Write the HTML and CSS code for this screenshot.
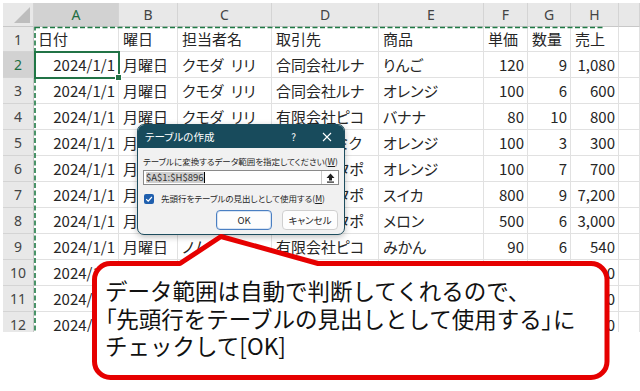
FILE: index.html
```html
<!DOCTYPE html>
<html lang="ja">

<head>
    <meta charset="UTF-8">
    <title>テーブルの作成</title>
    <link rel="stylesheet" href="styles.css">
</head>

<body>
    <div class="page">
        <div class="sheet">
            <div class="corner"><span></span></div>
            <div class="h sel">A</div><div class="h">B</div><div class="h">C</div><div class="h">D</div><div class="h">E</div><div class="h">F</div><div class="h">G</div><div class="h">H</div><div class="h"></div>

            <div class="r">1</div><div class="c">日付</div><div class="c">曜日</div><div class="c">担当者名</div><div class="c">取引先</div><div class="c">商品</div><div class="c">単価</div><div class="c">数量</div><div class="c">売上</div><div class="c"></div>
            <div class="r sel">2</div><div class="c n">2024/1/1</div><div class="c">月曜日</div><div class="c">クモダ&ensp;リリ</div><div class="c">合同会社ルナ</div><div class="c">りんご</div><div class="c n">120</div><div class="c n">9</div><div class="c n">1,080</div><div class="c"></div>
            <div class="r">3</div><div class="c n">2024/1/1</div><div class="c">月曜日</div><div class="c">クモダ&ensp;リリ</div><div class="c">合同会社ルナ</div><div class="c">オレンジ</div><div class="c n">100</div><div class="c n">6</div><div class="c n">600</div><div class="c"></div>
            <div class="r">4</div><div class="c n">2024/1/1</div><div class="c">月曜日</div><div class="c">クモダ&ensp;リリ</div><div class="c">有限会社ピコ</div><div class="c">バナナ</div><div class="c n">80</div><div class="c n">10</div><div class="c n">800</div><div class="c"></div>
            <div class="r">5</div><div class="c n">2024/1/1</div><div class="c">月曜日</div><div class="c">ノムラ&ensp;ケン</div><div class="c">株式会社ミク</div><div class="c">オレンジ</div><div class="c n">100</div><div class="c n">3</div><div class="c n">300</div><div class="c"></div>
            <div class="r">6</div><div class="c n">2024/1/1</div><div class="c">月曜日</div><div class="c">ノムラ&ensp;ケン</div><div class="c">株式会社タポ</div><div class="c">オレンジ</div><div class="c n">100</div><div class="c n">7</div><div class="c n">700</div><div class="c"></div>
            <div class="r">7</div><div class="c n">2024/1/1</div><div class="c">月曜日</div><div class="c">ノムラ&ensp;ケン</div><div class="c">株式会社タポ</div><div class="c">スイカ</div><div class="c n">800</div><div class="c n">9</div><div class="c n">7,200</div><div class="c"></div>
            <div class="r">8</div><div class="c n">2024/1/1</div><div class="c">月曜日</div><div class="c">ノムラ&ensp;ケン</div><div class="c">株式会社タポ</div><div class="c">メロン</div><div class="c n">500</div><div class="c n">6</div><div class="c n">3,000</div><div class="c"></div>
            <div class="r">9</div><div class="c n">2024/1/1</div><div class="c">月曜日</div><div class="c">ノムラ&ensp;ケン</div><div class="c">有限会社ピコ</div><div class="c">みかん</div><div class="c n">90</div><div class="c n">6</div><div class="c n">540</div><div class="c"></div>
            <div class="r">10</div><div class="c n">2024/1/1</div><div class="c">月曜日</div><div class="c">ノムラ&ensp;ケン</div><div class="c">有限会社ピコ</div><div class="c">りんご</div><div class="c n">120</div><div class="c n">5</div><div class="c n">600</div><div class="c"></div>
            <div class="r">11</div><div class="c n">2024/1/1</div><div class="c">月曜日</div><div class="c">ノムラ&ensp;ケン</div><div class="c">有限会社ピコ</div><div class="c">バナナ</div><div class="c n">80</div><div class="c n">5</div><div class="c n">400</div><div class="c"></div>
            <div class="r">12</div><div class="c n">2024/1/1</div><div class="c">月曜日</div><div class="c">ノムラ&ensp;ケン</div><div class="c">有限会社ピコ</div><div class="c">スイカ</div><div class="c n">800</div><div class="c n">2</div><div class="c n">1,600</div><div class="c"></div>

            <!-- active cell A2 -->
            <div class="active"><i class="handle"></i></div>
            <!-- marching ants around A1:H896 -->
            <svg class="ants" width="600" height="340">
                <rect x="32" y="24.5" width="584" height="400" fill="none" stroke="#1f7a45" stroke-width="1.6" stroke-dasharray="5 2.5" />
            </svg>
        </div>

        <div class="dialog">
            <div class="dlg-title">
                <span class="dlg-name">テーブルの作成</span>
                <span class="dlg-help">?</span>
                <svg class="dlg-close" width="10" height="10" viewBox="0 0 10 10">
                    <path d="M1 1 L9 9 M9 1 L1 9" stroke="#fff" stroke-width="1.1" />
                </svg>
            </div>
            <div class="dlg-body">
                <div class="dlg-label">テーブルに変換するデータ範囲を指定してください(<u>W</u>)</div>
                <div class="range">
                    <span class="range-text"><span class="hl">$A$1:$H$896</span><i class="caret"></i></span>
                    <span class="range-btn">
                        <svg width="9" height="10" viewBox="0 0 9 10">
                            <path d="M4.5 0.5 L8.5 5 H6 V7.5 H3 V5 H0.5 Z" fill="#222" />
                            <rect x="1" y="8.5" width="7" height="1.2" fill="#222" />
                        </svg>
                    </span>
                </div>
                <div class="check">
                    <span class="box">
                        <svg width="10" height="10" viewBox="0 0 10 10">
                            <path d="M2.2 5.2 L4.2 7.2 L7.9 3" fill="none" stroke="#fff" stroke-width="1.2" />
                        </svg>
                    </span>
                    <span>先頭行をテーブルの見出しとして使用する(<u>M</u>)</span>
                </div>
                <div class="dlg-buttons">
                    <button class="btn ok">OK</button>
                    <button class="btn">キャンセル</button>
                </div>
            </div>
        </div>

        <div class="callout">
            <svg class="callout-shape" width="520" height="150">
                <path d="M88 29.5 L129 2.5 L226 29.5 L499 29.5 A16 16 0 0 1 515 45.5 L515 127.5 A16 16 0 0 1 499 143.5 L18.5 143.5 A16 16 0 0 1 2.5 127.5 L2.5 45.5 A16 16 0 0 1 18.5 29.5 Z"
                    fill="#fff" stroke="#e60000" stroke-width="5" stroke-linejoin="round" />
            </svg>
            <p class="callout-text">データ範囲は自動で判断してくれるので、<br><span class="br">「</span>先頭行をテーブルの見出しとして使用する<span class="br">」</span>に<br>チェックして[OK]</p>
        </div>
    </div>
</body>

</html>
```

FILE: styles.css
```css
body {
    margin: 0;
    background: #fff;
}
.page {
    position: relative;
    width: 640px;
    height: 391px;
    overflow: hidden;
    background: #fff;
}

/* spreadsheet */
.sheet {
    position: relative;
    margin: 3px 0 0 3px;
    height: 329px;
    overflow: hidden;
    display: grid;
    grid-template-columns: 31px 85px 59px 94px 107px 105px 44px 43px 48px 21px;
    grid-template-rows: 24px 25px repeat(11, 26px);
}
.corner {
    background: #e8e8e8;
    border-right: 1px solid #d4d4d4;
    border-bottom: 1px solid #c8c8c8;
    display: flex;
    justify-content: flex-end;
    align-items: flex-end;
    padding: 0 3px 3px 0;
}
.corner span {
    width: 16px;
    height: 16px;
    background: #bdbdbd;
    clip-path: polygon(100% 0, 100% 100%, 0 100%);
}
.h {
    background: #e8e8e8;
    border-right: 1px solid #d4d4d4;
    border-bottom: 1px solid #c8c8c8;
    color: #444;
    font: 14px "Noto Sans", "Liberation Sans", sans-serif;
    display: flex;
    align-items: center;
    justify-content: center;
}
.r {
    background: #e8e8e8;
    border-right: 1px solid #c8c8c8;
    border-bottom: 1px solid #d4d4d4;
    color: #444;
    font: 14px "Noto Sans", "Liberation Sans", sans-serif;
    display: flex;
    align-items: center;
    justify-content: center;
}
.h.sel,
.r.sel {
    background: #d2d2d2;
    color: #1e6e42;
}
.c {
    border-right: 1px solid #e1e1e1;
    border-bottom: 1px solid #e1e1e1;
    padding: 0 3px 1px 4px;
    display: flex;
    align-items: center;
    white-space: nowrap;
    overflow: hidden;
    color: #262626;
    font: 15px "Noto Sans CJK JP", sans-serif;
    font-feature-settings: "palt";
}
.n {
    justify-content: flex-end;
}
.active {
    position: absolute;
    left: 31px;
    top: 48px;
    width: 86px;
    height: 28px;
    box-sizing: border-box;
    border: 2px solid #217346;
}
.handle {
    position: absolute;
    right: -4px;
    bottom: -4px;
    width: 5px;
    height: 5px;
    background: #217346;
    border: 1px solid #fff;
}
.ants {
    position: absolute;
    left: 0;
    top: 0;
}

/* dialog */
.dialog {
    position: absolute;
    left: 137px;
    top: 124px;
    width: 208px;
    height: 111px;
    box-sizing: border-box;
    border: 1px solid #1d4d5e;
    border-radius: 7px;
    overflow: hidden;
    background: #f1f1f1;
    box-shadow: 0 2px 6px rgba(0, 0, 0, 0.25);
    font-family: "Noto Sans CJK JP", sans-serif;
    font-feature-settings: "palt";
    color: #1f1f1f;
}
.dlg-title {
    height: 23px;
    background: #184b5c;
    color: #fff;
    display: flex;
    align-items: center;
    padding: 0 12px 0 7px;
    font-size: 10.5px;
}
.dlg-name {
    flex: 1;
}
.dlg-help {
    font-size: 10px;
    margin-right: 26px;
}
.dlg-body {
    padding: 7px 5px 0 5px;
    font-size: 8.5px;
}
.dlg-label {
    line-height: 13px;
    white-space: nowrap;
}
.range {
    margin-top: 2px;
    height: 15px;
    display: flex;
    background: #fff;
    border: 1px solid #8a8a8a;
    box-sizing: border-box;
}
.range-text {
    flex: 1;
    display: flex;
    align-items: center;
    padding-left: 2px;
    font-size: 9.5px;
    color: #333;
}
.hl {
    background: #cfcfcf;
    line-height: 11px;
}
.caret {
    width: 1px;
    height: 11px;
    background: #000;
}
.range-btn {
    width: 16px;
    border-left: 1px solid #c8c8c8;
    display: flex;
    align-items: center;
    justify-content: center;
}
.check {
    margin-top: 8px;
    display: flex;
    align-items: center;
    gap: 7px;
    padding-left: 1px;
    white-space: nowrap;
    line-height: 11px;
}
.box {
    width: 10px;
    height: 10px;
    border-radius: 2px;
    background: #1f5fae;
    display: flex;
}
.dlg-buttons {
    margin-top: 6px;
    display: flex;
    justify-content: flex-end;
    gap: 10px;
    padding-right: 1px;
}
.btn {
    width: 56px;
    height: 20px;
    padding: 0;
    border: 1px solid #cfcfcf;
    border-radius: 4px;
    background: #fdfdfd;
    font: 9.5px "Noto Sans CJK JP", sans-serif;
    font-feature-settings: "palt";
    color: #1f1f1f;
}
.btn.ok {
    border-color: #4a7fc2;
    box-shadow: inset 0 0 0 1px #d8e4f3;
}

/* callout */
.callout {
    position: absolute;
    left: 92px;
    top: 234px;
    width: 520px;
    height: 150px;
}
.callout-shape {
    position: absolute;
    left: 0;
    top: 0;
}
.callout-text {
    position: relative;
    margin: 0;
    padding: 43px 0 0 13px;
    font: 22.5px/27.5px "Noto Sans CJK JP", sans-serif;
    color: #111;
    white-space: nowrap;
}
.callout-text .br {
    font-feature-settings: "palt";
}
```
